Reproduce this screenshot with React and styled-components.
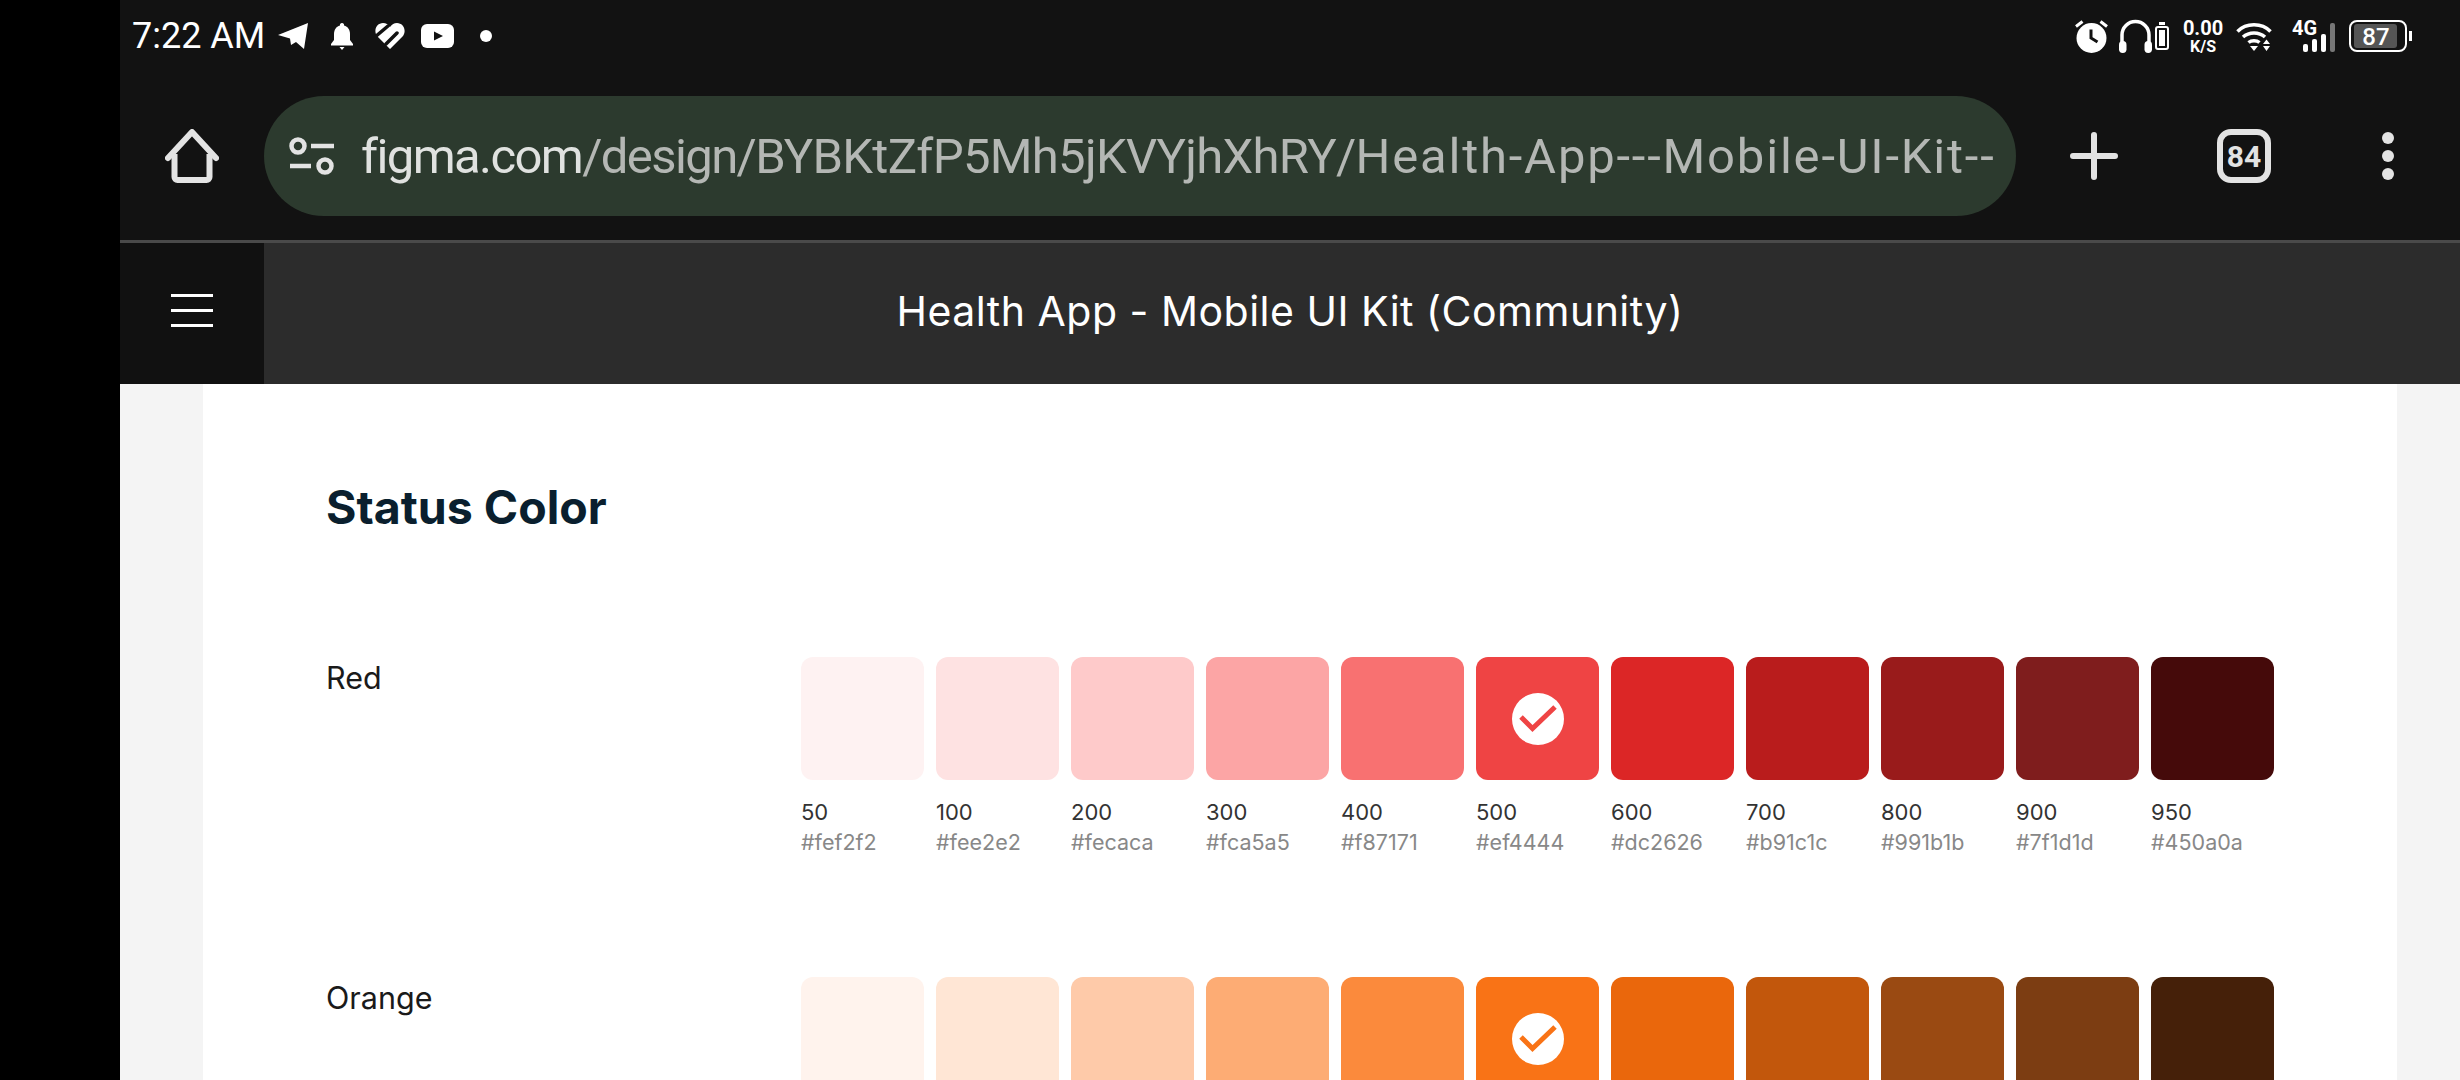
import React from 'react'
import styled, { createGlobalStyle } from 'styled-components'

const GlobalStyle = createGlobalStyle`
  html, body {
    margin: 0;
    background: #000;
  }

  body {
    width: 2460px;
    height: 1080px;
    overflow: hidden;
    font-family: Inter, "Liberation Sans", sans-serif;
  }
`

const Screen = styled.div`
  display: flex;
  width: 2460px;
  height: 1080px;
  overflow: hidden;
  background: #000;
`

const Cutout = styled.div`
  flex: 0 0 120px;
  background: #000;
`

const Main = styled.div`
  display: flex;
  flex-direction: column;
  flex: 1;
  min-width: 0;
`

const StatusBar = styled.div`
  display: flex;
  flex: none;
  align-items: center;
  justify-content: space-between;
  height: 72px;
  padding: 0 48px 0 12px;
  background: #121212;
  color: #fff;
`

const StatusGroup = styled.div`
  display: flex;
  align-items: center;
`

const Clock = styled.span`
  font-family: Roboto, sans-serif;
  font-size: 36px;
  line-height: 72px;
  color: #fff;
`

const StatusIcon = styled.svg`
  display: block;
  flex: none;
  margin-left: ${(p) => p.$left || 0}px;
`

const Speed = styled.div`
  display: flex;
  flex-direction: column;
  align-items: center;
  width: 40px;
  margin-left: 14px;
  font-family: Roboto, sans-serif;
  font-weight: 700;
  color: #fff;
`

const SpeedValue = styled.span`
  font-size: 20px;
  line-height: 20px;
`

const SpeedUnit = styled.span`
  font-size: 16px;
  line-height: 17px;
`

const Toolbar = styled.div`
  display: flex;
  flex: none;
  align-items: center;
  height: 168px;
  background: #121212;
  border-bottom: 3px solid #4a4a4a;
`

const ToolSlot = styled.div`
  display: flex;
  align-items: center;
  justify-content: center;
  flex: 0 0 ${(p) => p.$width}px;
`

const UrlPill = styled.div`
  display: flex;
  align-items: center;
  flex: 0 0 1752px;
  box-sizing: border-box;
  height: 120px;
  padding: 0 8px 0 25px;
  border-radius: 60px;
  background: #2c3a2e;
`

const UrlText = styled.span`
  margin-left: 26px;
  font-family: Roboto, sans-serif;
  font-size: 49px;
  white-space: nowrap;
  color: #b4b7b4;
`

const UrlPart = styled.span`
  letter-spacing: ${(p) => p.$tracking}px;
  color: ${(p) => p.$color || 'inherit'};
`

const TabCount = styled.div`
  display: flex;
  align-items: center;
  justify-content: center;
  box-sizing: border-box;
  width: 54px;
  height: 54px;
  border: 6px solid #e3e3e3;
  border-radius: 14px;
  font-family: Roboto, sans-serif;
  font-size: 30px;
  font-weight: 700;
  color: #e3e3e3;
`

const FigmaBar = styled.div`
  display: flex;
  flex: none;
  align-items: stretch;
  height: 141px;
  background: #2c2c2c;
`

const MenuButton = styled.div`
  display: flex;
  flex-direction: column;
  align-items: center;
  justify-content: center;
  flex: 0 0 144px;
  gap: 12px;
  box-sizing: border-box;
  padding-bottom: 6px;
  background: #111;
`

const MenuLine = styled.span`
  width: 42px;
  height: 3px;
  background: #fff;
`

const FigmaTitle = styled.div`
  flex: 1;
  padding-right: 144px;
  font-size: 41px;
  letter-spacing: 0.5px;
  line-height: 137px;
  text-align: center;
  color: #fff;
`

const Canvas = styled.div`
  flex: 1;
  min-height: 0;
  overflow: hidden;
  padding: 0 63px 0 83px;
  background: #f4f4f4;
`

const Page = styled.div`
  height: 100%;
  padding: 0 0 0 123px;
  background: #fff;
`

const Heading = styled.h1`
  margin: 0 0 125px;
  padding-top: 98px;
  font-size: 46.500px;
  font-weight: 700;
  line-height: 50px;
  color: #0a1f2e;
`

const ColorRow = styled.div`
  display: grid;
  grid-template-columns: 475px 1fr;
  height: 320px;
`

const ColorName = styled.div`
  font-size: 30.500px;
  line-height: 42px;
  color: #1a1a1a;
`

const Swatches = styled.div`
  display: grid;
  grid-template-columns: repeat(11, 123px);
  gap: 12px;
  align-content: start;
`

const Swatch = styled.div`
  display: flex;
  align-items: center;
  justify-content: center;
  height: 123px;
  margin-bottom: 18px;
  border-radius: 12px;
  background: ${(p) => p.$color};
`

const ShadeName = styled.div`
  font-size: 22px;
  line-height: 28px;
  color: #333;
`

const ShadeHex = styled.div`
  font-size: 21.500px;
  line-height: 32px;
  color: #888;
`

const shades = [50, 100, 200, 300, 400, 500, 600, 700, 800, 900, 950]

// orange labels fall below the fold, so the row only has swatches
const palettes = [
  {
    name: 'Red',
    labels: true,
    colors: ['#fef2f2', '#fee2e2', '#fecaca', '#fca5a5', '#f87171', '#ef4444', '#dc2626', '#b91c1c', '#991b1b', '#7f1d1d', '#450a0a'],
  },
  {
    name: 'Orange',
    labels: false,
    colors: ['#fff3ed', '#ffe6d5', '#fecaa9', '#fdac74', '#fb8a3c', '#f97316', '#ea670c', '#c2570c', '#9a4a12', '#7c3d12', '#452009'],
  },
]

const CheckBadge = ({ color }) => (
  <svg width="52" height="52" viewBox="0 0 52 52">
    <circle cx="26" cy="26" r="26" fill="#fff" />
    <path d="M9 24l11.500 11.500L43 14" fill="none" stroke={color} strokeWidth="5" />
  </svg>
)

const TelegramIcon = (props) => (
  <StatusIcon width="30" height="26" viewBox="0 0 30 26" {...props}>
    <path d="M30 0L0 12l12 3.500L13 22l5-3 8 7z" fill="#fff" />
  </StatusIcon>
)

const BellIcon = (props) => (
  <StatusIcon width="22" height="27" viewBox="0 0 22 27" {...props}>
    <path d="M11 0a2 2 0 0 1 2 2.500c4 1 6 4.500 6 8.500v6l3 4v1.500H0V21l3-4v-6c0-4 2-7.500 6-8.500A2 2 0 0 1 11 0zM8.500 24h5L11 27z" fill="#fff" />
  </StatusIcon>
)

const HealthIcon = (props) => (
  <StatusIcon width="30" height="26" viewBox="0 0 30 26" {...props}>
    <path d="M15 26L2 13C-2 7 2 0 8 0c3 0 5 1.500 7 4 2-2.500 4-4 7-4 6 0 10 7 6 13z" fill="#fff" />
    <path d="M0 14L13 3M11 21L22 10" fill="none" stroke="#121212" strokeWidth="3.500" strokeLinecap="round" />
  </StatusIcon>
)

const YoutubeIcon = (props) => (
  <StatusIcon width="33" height="24" viewBox="0 0 33 24" {...props}>
    <rect width="33" height="24" rx="6" fill="#fff" />
    <path d="M13 7.500l9 4.500-9 4.500z" fill="#121212" />
  </StatusIcon>
)

const DotIcon = (props) => (
  <StatusIcon width="12" height="12" viewBox="0 0 12 12" {...props}>
    <circle cx="6" cy="6" r="6" fill="#fff" />
  </StatusIcon>
)

const AlarmIcon = (props) => (
  <StatusIcon width="33" height="33" viewBox="0 0 33 33" {...props}>
    <circle cx="16.500" cy="18" r="15" fill="#fff" />
    <path d="M16 9.500V18l6.500 4" fill="none" stroke="#121212" strokeWidth="3" />
    <path d="M1 6.500L7.500 1.500M32 6.500L25.500 1.500" stroke="#fff" strokeWidth="3" />
  </StatusIcon>
)

const HeadphonesIcon = (props) => (
  <StatusIcon width="33" height="34" viewBox="0 0 33 34" {...props}>
    <path d="M3 24V16a13.500 13.500 0 0 1 27 0v8" fill="none" stroke="#fff" strokeWidth="3.500" />
    <rect x="0" y="22" width="7.500" height="12" rx="3.700" fill="#fff" />
    <rect x="25.500" y="22" width="7.500" height="12" rx="3.700" fill="#fff" />
  </StatusIcon>
)

const SmallBatteryIcon = (props) => (
  <StatusIcon width="14" height="28" viewBox="0 0 14 28" {...props}>
    <rect x="4" y="0" width="6" height="3" fill="#fff" />
    <rect x="1" y="5" width="12" height="22" rx="2" fill="none" stroke="#fff" strokeWidth="2" />
    <rect x="4" y="8" width="6" height="16" fill="#fff" />
  </StatusIcon>
)

const WifiIcon = (props) => (
  <StatusIcon width="36" height="29" viewBox="0 0 36 29" {...props}>
    <g fill="none" stroke="#fff" strokeWidth="3.500">
      <path d="M1.500 9.500C10 .5 26 .5 34.500 9.500" />
      <path d="M7 15c6-5.500 16-5.500 22 0" />
      <path d="M12.500 20.500c3-2.500 8-2.500 11 0" />
    </g>
    <path d="M14 24h8l-4 5z" fill="#fff" />
    <path d="M27 22l3.500-4.500L34 22zM27 24h7l-3.500 5z" fill="#fff" />
  </StatusIcon>
)

const SignalIcon = (props) => (
  <StatusIcon width="44" height="42" viewBox="0 0 44 42" {...props}>
    <text x="0" y="20" fontFamily="Roboto, sans-serif" fontSize="20" fontWeight="700" fill="#fff">4G</text>
    <rect x="11" y="29" width="5" height="8" rx="2" fill="#fff" />
    <rect x="20" y="24" width="5" height="13" rx="2" fill="#fff" />
    <rect x="29" y="19" width="5" height="18" rx="2" fill="#fff" />
    <rect x="38" y="8" width="5" height="29" rx="2" fill="#777" />
  </StatusIcon>
)

const BatteryIcon = (props) => (
  <StatusIcon width="63" height="32" viewBox="0 0 63 32" {...props}>
    <rect x="1" y="1" width="56" height="30" rx="7" fill="none" stroke="#fff" strokeWidth="2" />
    <rect x="5" y="4" width="43" height="24" rx="3" fill="#555" />
    <rect x="60" y="11" width="3" height="10" fill="#fff" />
    <text x="27" y="25" textAnchor="middle" fontFamily="Roboto, sans-serif" fontSize="24" fontWeight="500" fill="#fff">87</text>
  </StatusIcon>
)

const HomeIcon = () => (
  <svg width="54" height="54" viewBox="0 0 54 54">
    <path d="M3 29L27 3l24 26" fill="none" stroke="#e3e3e3" strokeWidth="6" strokeLinecap="round" strokeLinejoin="round" />
    <path d="M9.500 25v23a3 3 0 0 0 3 3h29a3 3 0 0 0 3-3V25" fill="none" stroke="#e3e3e3" strokeWidth="6" />
  </svg>
)

const SiteIcon = () => (
  <svg width="46" height="38" viewBox="0 0 46 38">
    <circle cx="9" cy="9" r="6.500" fill="none" stroke="#e3e3e3" strokeWidth="4.500" />
    <circle cx="36" cy="29" r="6.500" fill="none" stroke="#e3e3e3" strokeWidth="4.500" />
    <path d="M22 9h23M1 29h21" stroke="#e3e3e3" strokeWidth="4.500" />
  </svg>
)

const PlusIcon = () => (
  <svg width="48" height="48" viewBox="0 0 48 48">
    <path d="M24 3v42M3 24h42" stroke="#e3e3e3" strokeWidth="6" strokeLinecap="round" />
  </svg>
)

const MoreIcon = () => (
  <svg width="12" height="48" viewBox="0 0 12 48">
    <circle cx="6" cy="6" r="6" fill="#e3e3e3" />
    <circle cx="6" cy="24" r="6" fill="#e3e3e3" />
    <circle cx="6" cy="42" r="6" fill="#e3e3e3" />
  </svg>
)

const App = () => (
  <Screen>
    <GlobalStyle />
    <Cutout />
    <Main>
      <StatusBar>
        <StatusGroup>
          <Clock>7:22 AM</Clock>
          <TelegramIcon $left={13} />
          <BellIcon $left={23} />
          <HealthIcon $left={22} />
          <YoutubeIcon $left={16} />
          <DotIcon $left={26} />
        </StatusGroup>
        <StatusGroup>
          <AlarmIcon />
          <HeadphonesIcon $left={11} />
          <SmallBatteryIcon $left={3} />
          <Speed>
            <SpeedValue>0.00</SpeedValue>
            <SpeedUnit>K/S</SpeedUnit>
          </Speed>
          <WifiIcon $left={13} />
          <SignalIcon $left={20} />
          <BatteryIcon $left={13} />
        </StatusGroup>
      </StatusBar>
      <Toolbar>
        <ToolSlot $width={144}>
          <HomeIcon />
        </ToolSlot>
        <UrlPill>
          <SiteIcon />
          <UrlText>
            <UrlPart $tracking={-1.6} $color="#e0e2e0">figma.com</UrlPart>
            <UrlPart $tracking={-1.6}>/design/</UrlPart>
            <UrlPart $tracking={-0.7}>BYBKtZfP5Mh5jKVYjhXhRY/</UrlPart>
            <UrlPart $tracking={1.8}>Health-App---Mobile-UI-Kit--</UrlPart>
          </UrlText>
        </UrlPill>
        <ToolSlot $width={156}>
          <PlusIcon />
        </ToolSlot>
        <ToolSlot $width={144}>
          <TabCount>84</TabCount>
        </ToolSlot>
        <ToolSlot $width={144}>
          <MoreIcon />
        </ToolSlot>
      </Toolbar>
      <FigmaBar>
        <MenuButton>
          <MenuLine />
          <MenuLine />
          <MenuLine />
        </MenuButton>
        <FigmaTitle>Health App - Mobile UI Kit (Community)</FigmaTitle>
      </FigmaBar>
      <Canvas>
        <Page>
          <Heading>Status Color</Heading>
          {palettes.map((palette) => (
            <ColorRow key={palette.name}>
              <ColorName>{palette.name}</ColorName>
              <Swatches>
                {palette.colors.map((color, i) => (
                  <div key={color}>
                    <Swatch $color={color}>
                      {shades[i] === 500 && <CheckBadge color={color} />}
                    </Swatch>
                    {palette.labels && <ShadeName>{shades[i]}</ShadeName>}
                    {palette.labels && <ShadeHex>{color}</ShadeHex>}
                  </div>
                ))}
              </Swatches>
            </ColorRow>
          ))}
        </Page>
      </Canvas>
    </Main>
  </Screen>
)

export default App
